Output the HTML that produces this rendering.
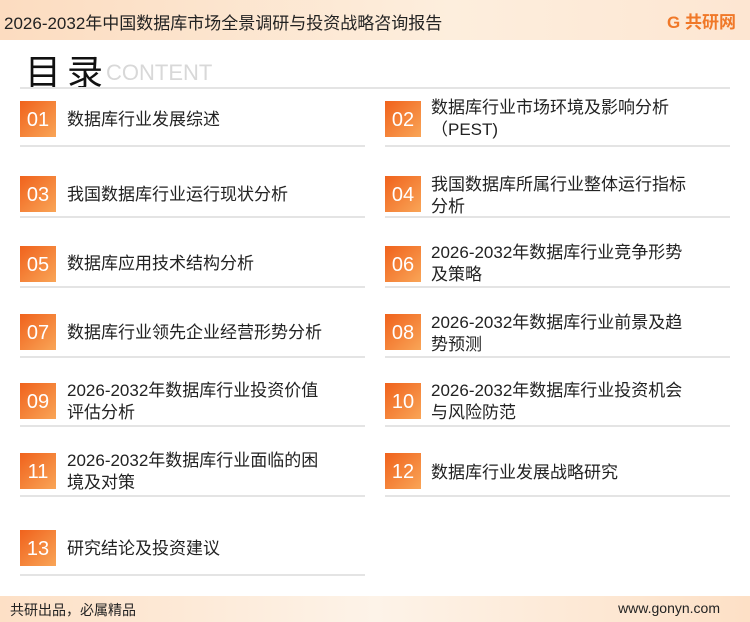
<!DOCTYPE html><html><head><meta charset="utf-8"><style>
body{margin:0;width:750px;height:622px;position:relative;overflow:hidden;background:#fff;font-family:"Liberation Sans","Noto Sans CJK SC",sans-serif;color:#222}
.hd{position:absolute;left:0;top:0;width:750px;height:40px;background:linear-gradient(90deg,#fcdcc0,#fdeedd 60%,#fde6d2)}
.hd .t{position:absolute;left:4px;top:9px;font-size:17px;color:#222}
.logo{position:absolute;right:14px;top:8px;font-size:17px;font-weight:bold;color:#f07828}
.ft{position:absolute;left:0;top:596px;width:750px;height:26px;background:linear-gradient(90deg,#fde0c6,#fdf3e8 50%,#fde0c6)}
.ft span{position:absolute;top:4px;font-size:14px;color:#222}
.ttl{position:absolute;left:25px;top:44px;font-size:36px;color:#111;letter-spacing:6px}
.ct{position:absolute;left:106px;top:60px;font-size:22px;color:#d8d8d8}
.ln{position:absolute;height:2px;background:#e4e4e4}
.b{position:absolute;width:36px;height:36px;background:linear-gradient(135deg,#f0621c,#f9a557);color:#fff;font-size:20px;text-align:center;line-height:38px}
.x{position:absolute;font-size:17px;line-height:22px;color:#222}
</style></head><body>
<div class="hd"><div class="t">2026-2032年中国数据库市场全景调研与投资战略咨询报告</div><div class="logo">G 共研网</div></div>
<div class="ttl">目录</div><div class="ct">CONTENT</div>
<div class="ln" style="left:20px;top:87px;width:710px"></div>

<div class="b" style="left:20px;top:101px">01</div><div class="x" style="left:67px;top:109px">数据库行业发展综述</div>
<div class="b" style="left:385px;top:101px">02</div><div class="x" style="left:431px;top:97px">数据库行业市场环境及影响分析<br>（PEST)</div>
<div class="ln" style="left:20px;top:145px;width:345px"></div><div class="ln" style="left:385px;top:145px;width:345px"></div>

<div class="b" style="left:20px;top:176px">03</div><div class="x" style="left:67px;top:184px">我国数据库行业运行现状分析</div>
<div class="b" style="left:385px;top:176px">04</div><div class="x" style="left:431px;top:174px">我国数据库所属行业整体运行指标<br>分析</div>
<div class="ln" style="left:20px;top:216px;width:345px"></div><div class="ln" style="left:385px;top:216px;width:345px"></div>

<div class="b" style="left:20px;top:246px">05</div><div class="x" style="left:67px;top:253px">数据库应用技术结构分析</div>
<div class="b" style="left:385px;top:246px">06</div><div class="x" style="left:431px;top:242px">2026-2032年数据库行业竞争形势<br>及策略</div>
<div class="ln" style="left:20px;top:286px;width:345px"></div><div class="ln" style="left:385px;top:286px;width:345px"></div>

<div class="b" style="left:20px;top:314px">07</div><div class="x" style="left:67px;top:322px">数据库行业领先企业经营形势分析</div>
<div class="b" style="left:385px;top:314px">08</div><div class="x" style="left:431px;top:312px">2026-2032年数据库行业前景及趋<br>势预测</div>
<div class="ln" style="left:20px;top:356px;width:345px"></div><div class="ln" style="left:385px;top:356px;width:345px"></div>

<div class="b" style="left:20px;top:383px">09</div><div class="x" style="left:67px;top:380px">2026-2032年数据库行业投资价值<br>评估分析</div>
<div class="b" style="left:385px;top:383px">10</div><div class="x" style="left:431px;top:380px">2026-2032年数据库行业投资机会<br>与风险防范</div>
<div class="ln" style="left:20px;top:425px;width:345px"></div><div class="ln" style="left:385px;top:425px;width:345px"></div>

<div class="b" style="left:20px;top:453px">11</div><div class="x" style="left:67px;top:450px">2026-2032年数据库行业面临的困<br>境及对策</div>
<div class="b" style="left:385px;top:453px">12</div><div class="x" style="left:431px;top:462px">数据库行业发展战略研究</div>
<div class="ln" style="left:20px;top:495px;width:345px"></div><div class="ln" style="left:385px;top:495px;width:345px"></div>

<div class="b" style="left:20px;top:530px">13</div><div class="x" style="left:67px;top:538px">研究结论及投资建议</div>
<div class="ln" style="left:20px;top:574px;width:345px"></div>

<div class="ft"><span style="left:10px">共研出品，必属精品</span><span style="right:30px">www.gonyn.com</span></div>
</body></html>
